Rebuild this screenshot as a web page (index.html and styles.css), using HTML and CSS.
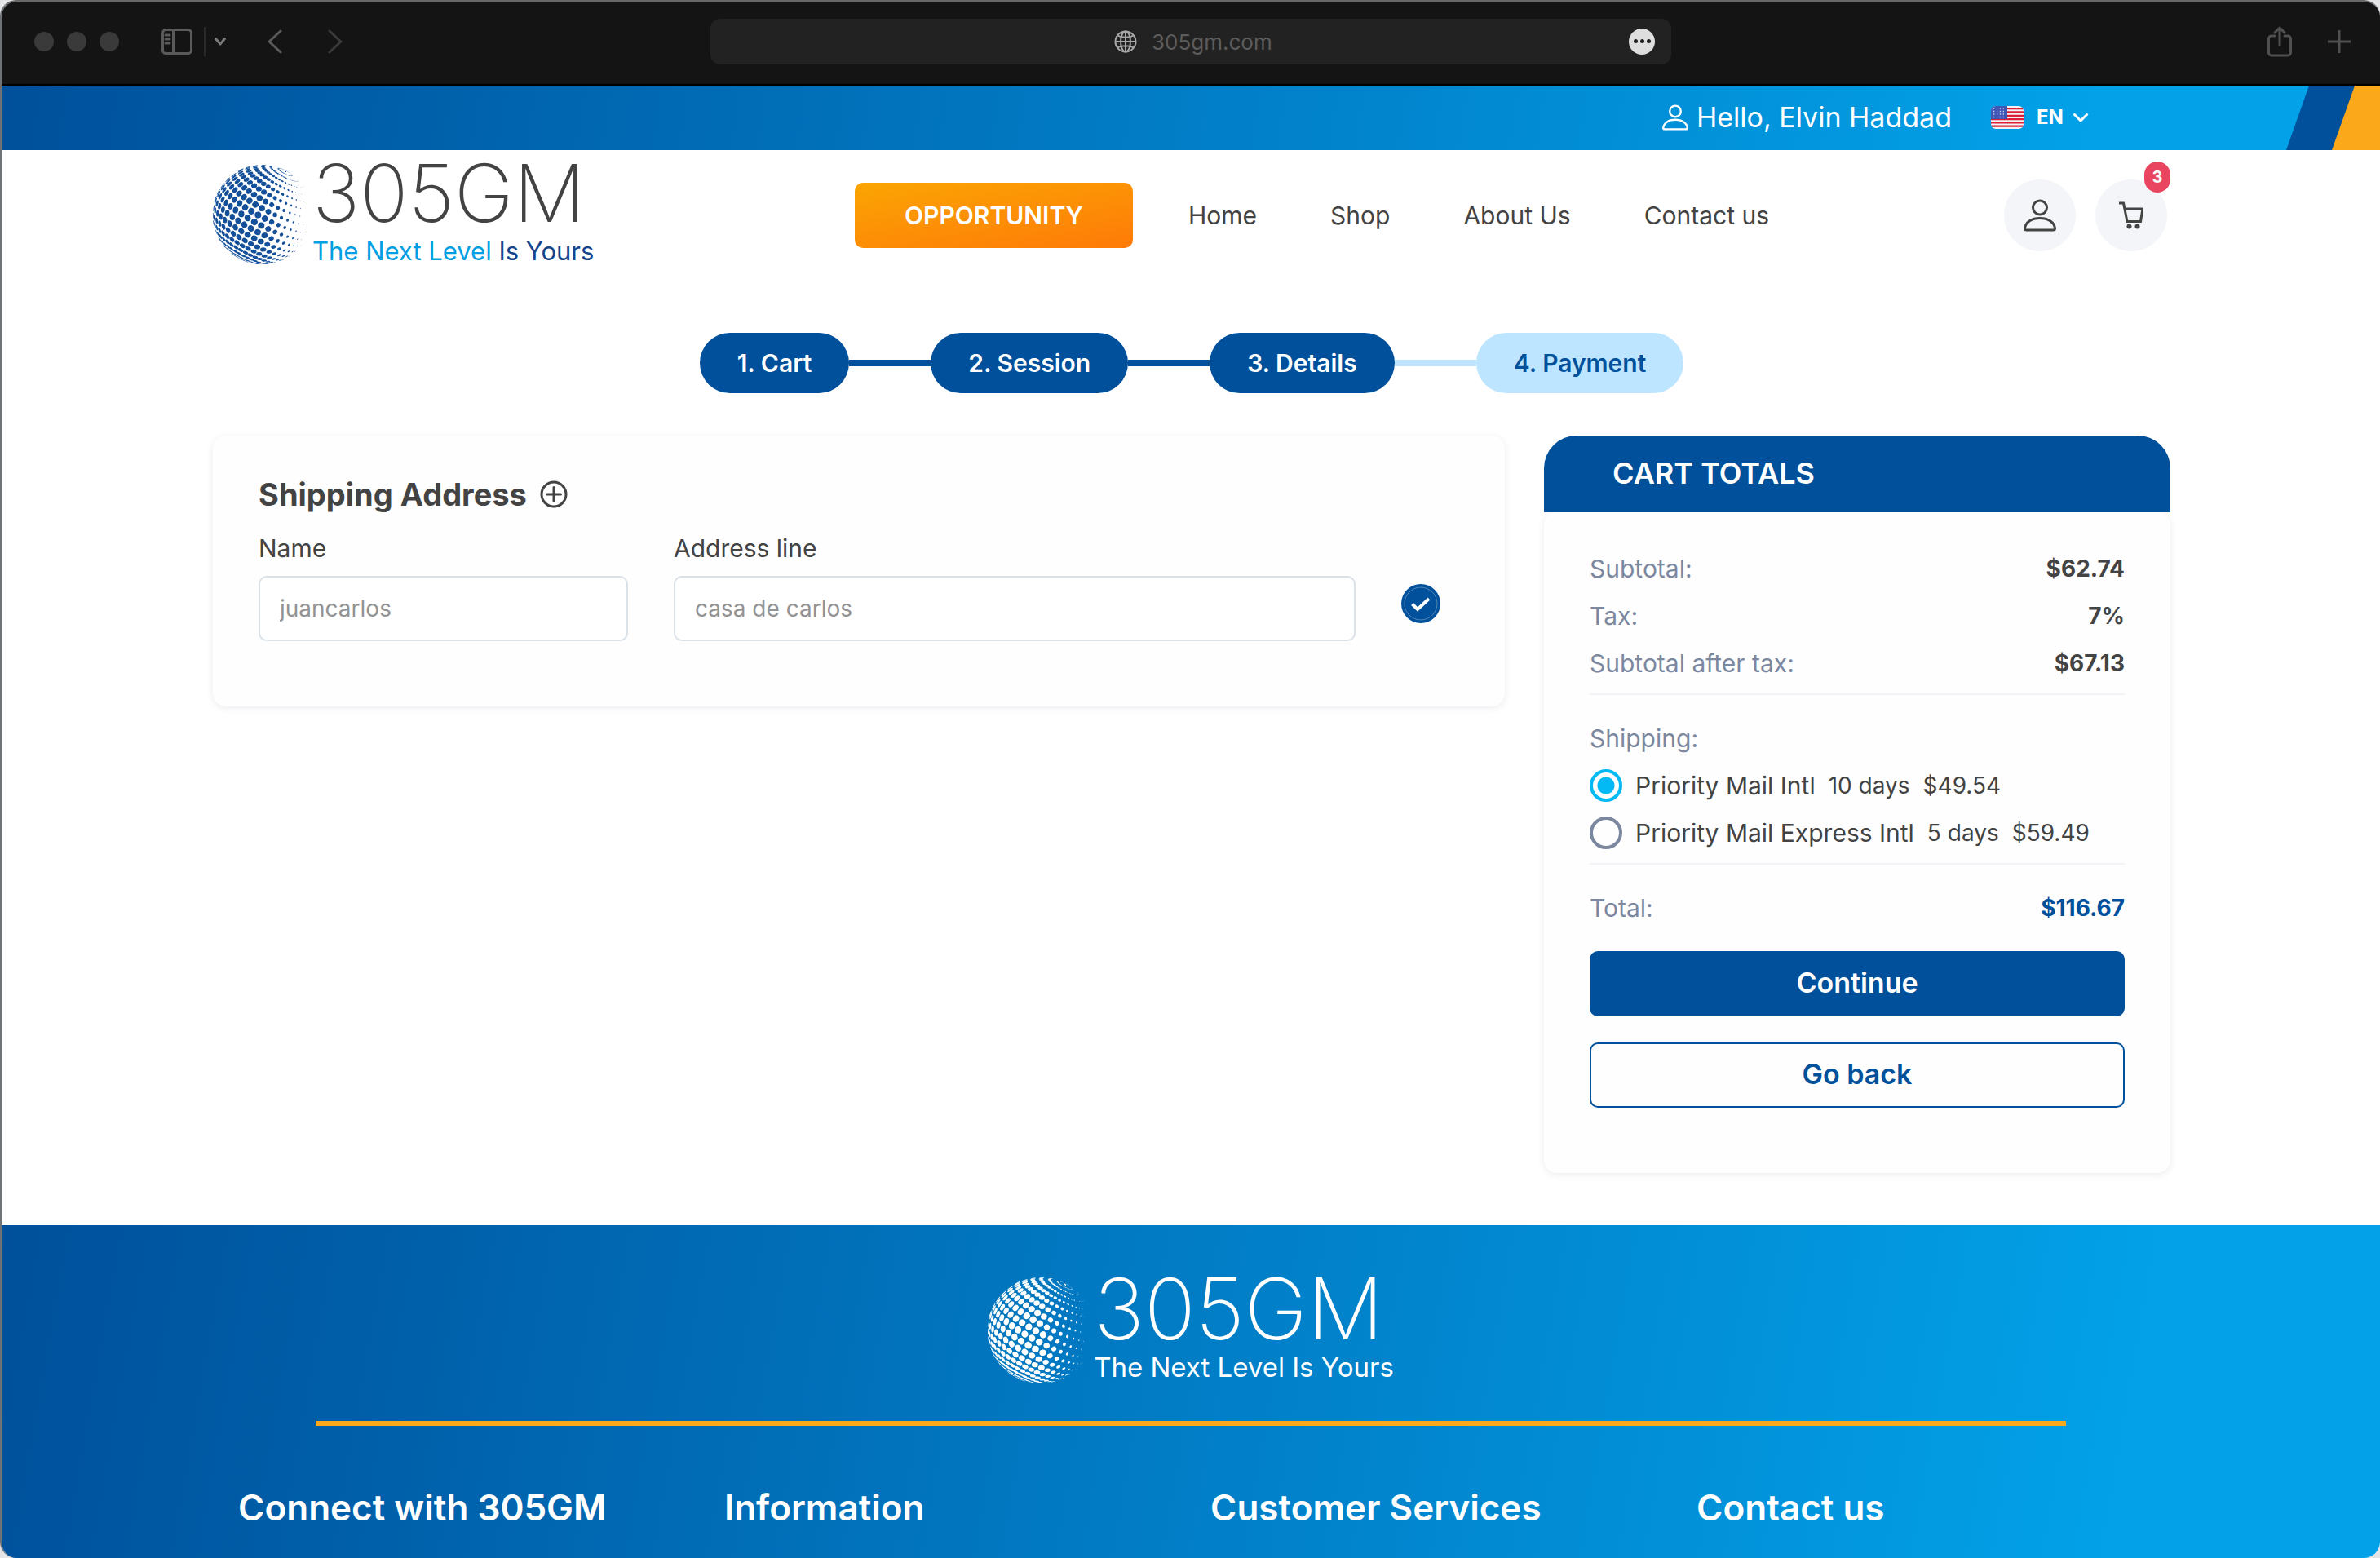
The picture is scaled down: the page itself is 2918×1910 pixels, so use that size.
FILE: index.html
```html
<!DOCTYPE html>
<html lang="en">
<head>
<meta charset="utf-8">
<meta name="viewport" content="width=device-width, initial-scale=1">
<title>305GM – Checkout</title>
<link rel="stylesheet" href="styles.css">
</head>
<body>
<svg class="sprite" width="0" height="0" aria-hidden="true">
  <symbol id="globe" viewBox="-1 -1 2 2"></symbol>
  <symbol id="user" viewBox="0 0 40 40">
    <circle cx="20" cy="10.500" r="8.500"/>
    <path d="M3.500 38C2 38 1.500 37 1.500 36C2.500 28 10 23.500 20 23.500S37.500 28 38.500 36C38.500 37 38 38 36.500 38Z"/>
  </symbol>
</svg>
<div class="window">
  <div class="toolbar">
    <div class="toolbar-left">
      <span class="lights"><i></i><i></i><i></i></span>
      <button class="tool tool-sidebar" aria-label="Sidebar">
        <svg width="38" height="32" viewBox="0 0 38 32"><rect x="1.500" y="1.500" width="35" height="29" rx="4"/><path d="M14.500 2v28M5 8h5M5 13h5M5 18h5"/></svg>
      </button>
      <button class="tool tool-menu" aria-label="Tab groups">
        <svg width="14" height="10" viewBox="0 0 14 10"><path d="M1.500 1.500L7 8l5.500-6.500"/></svg>
      </button>
      <button class="tool tool-back" aria-label="Back">
        <svg width="20" height="30" viewBox="0 0 20 30"><path d="M17 2L3 15l14 13"/></svg>
      </button>
      <button class="tool tool-forward" aria-label="Forward">
        <svg width="20" height="30" viewBox="0 0 20 30"><path d="M3 2l14 13L3 28"/></svg>
      </button>
    </div>
    <div class="address">
      <svg class="address-globe" width="28" height="28" viewBox="0 0 28 28"><circle cx="14" cy="14" r="12.500"/><ellipse cx="14" cy="14" rx="6" ry="12.500"/><path d="M14 1.500v25M1.500 14h25M4 6.500c5 3 15 3 20 0M4 21.500c5-3 15-3 20 0"/></svg>
      <input class="address-input" type="text" value="305gm.com" aria-label="Address">
      <button class="address-more" aria-label="More"><i></i><i></i><i></i></button>
    </div>
    <div class="toolbar-right">
      <button class="tool" aria-label="Share">
        <svg width="30" height="38" viewBox="0 0 30 38"><path d="M9 12H5c-2 0-3.500 1.500-3.500 3.500v17C1.500 34.500 3 36 5 36h20c2 0 3.500-1.500 3.500-3.500v-17c0-2-1.500-3.500-3.500-3.500h-4M15 23V2M9 8l6-6 6 6"/></svg>
      </button>
      <button class="tool" aria-label="New tab">
        <svg width="28" height="28" viewBox="0 0 28 28"><path d="M14 0.500v27M0.500 14h27"/></svg>
      </button>
    </div>
  </div>

  <div class="topbar">
    <div class="container topbar-inner">
      <span class="greeting"><svg class="icon-user" width="32" height="32"><use href="#user"/></svg>Hello, Elvin Haddad</span>
      <label class="language">
        <svg class="flag" width="40" height="28" viewBox="0 0 40 28" aria-label="Language">
          <rect width="40" height="28" fill="#f3f3f5"/>
          <path d="M0 3.200h40M0 7.500h40M0 11.800h40M0 16.100h40M0 20.400h40M0 24.700h40" stroke="#dd1f35" stroke-width="2.300"/>
          <rect width="20" height="16" fill="#3f55b5"/>
          <path d="M3 3h16M3 6.500h16M3 10h16M3 13.500h16" stroke="#c9d0f0" stroke-width="1.300" stroke-dasharray="1.300 2.600"/>
        </svg>
        <select class="language-select"><option>EN</option><option>ES</option></select>
        <svg class="language-arrow" width="20" height="12" viewBox="0 0 20 12"><path d="M1.500 1.500L10 10l8.500-8.500"/></svg>
      </label>
    </div>
    <span class="stripe"></span>
  </div>

  <header class="container header">
    <a class="logo" href="#">
      <svg class="logo-globe"><use href="#globe"/></svg>
      <span class="logo-text"><span class="logo-name">305GM</span><span class="logo-tagline">The Next Level <span class="logo-accent">Is Yours</span></span></span>
    </a>
    <nav class="nav">
      <a class="opportunity" href="#">OPPORTUNITY</a>
      <a href="#">Home</a>
      <a href="#">Shop</a>
      <a href="#">About Us</a>
      <a href="#">Contact us</a>
    </nav>
    <div class="actions">
      <button class="round" aria-label="Account"><svg class="icon-user" width="40" height="40"><use href="#user"/></svg></button>
      <button class="round" aria-label="Cart">
        <svg width="30" height="36" viewBox="0 0 30 36"><path class="line" d="M0 3h5.500L10 25.500h16.500L29 10H7"/><circle cx="12.500" cy="31.500" r="3"/><circle cx="22.500" cy="31.500" r="3"/></svg>
        <span class="badge">3</span>
      </button>
    </div>
  </header>

  <main class="container">
    <ol class="steps">
      <li>1. Cart</li>
      <li>2. Session</li>
      <li>3. Details</li>
      <li class="pending">4. Payment</li>
    </ol>
    <div class="columns">
      <section class="card shipping">
        <h2>Shipping Address
          <button class="add" aria-label="Add address"><svg width="34" height="34" viewBox="0 0 34 34"><circle cx="17" cy="17" r="15"/><path d="M17 8.500v17M8.500 17h17"/></svg></button>
        </h2>
        <div class="fields">
          <div class="field"><label for="name">Name</label><input id="name" type="text" placeholder="juancarlos"></div>
          <div class="field"><label for="address">Address line</label><input id="address" type="text" placeholder="casa de carlos"></div>
          <button class="confirm" aria-label="Use this address"><svg width="48" height="48" viewBox="0 0 48 48"><circle class="disc" cx="24" cy="24" r="24"/><circle class="ring" cx="24" cy="24" r="20"/><path d="M13.500 24.500l6.500 6.500L34 18"/></svg></button>
        </div>
      </section>
      <section class="cart">
        <h2>CART TOTALS</h2>
        <div class="card totals">
          <dl>
            <div class="row"><dt>Subtotal:</dt><dd>$62.74</dd></div>
            <div class="row"><dt>Tax:</dt><dd>7%</dd></div>
            <div class="row"><dt>Subtotal after tax:</dt><dd>$67.13</dd></div>
          </dl>
          <fieldset>
            <legend>Shipping:</legend>
            <label class="rate"><input type="radio" name="rate" checked><span>Priority Mail Intl</span><span class="rate-detail">10 days</span><span class="rate-detail">$49.54</span></label>
            <label class="rate"><input type="radio" name="rate"><span>Priority Mail Express Intl</span><span class="rate-detail">5 days</span><span class="rate-detail">$59.49</span></label>
          </fieldset>
          <dl>
            <div class="row grand"><dt>Total:</dt><dd>$116.67</dd></div>
          </dl>
          <div class="buttons">
            <button class="button primary">Continue</button>
            <button class="button">Go back</button>
          </div>
        </div>
      </section>
    </div>
  </main>

  <footer class="footer">
    <a class="logo logo-light" href="#">
      <svg class="logo-globe"><use href="#globe"/></svg>
      <span class="logo-text"><span class="logo-name">305GM</span><span class="logo-tagline">The Next Level Is Yours</span></span>
    </a>
    <hr>
    <div class="footer-columns">
      <h3>Connect with 305GM</h3>
      <h3>Information</h3>
      <h3>Customer Services</h3>
      <h3>Contact us</h3>
    </div>
  </footer>
</div>
<script src="globe.js"></script>
</body>
</html>
```
FILE: styles.css
```css
* { box-sizing: border-box; }

body {
  margin: 0;
  background: #e4e4e6;
  color: #434343;
  font-family: Inter, "Liberation Sans", sans-serif;
  font-size: 30px;
  line-height: 40px;
}

button, input, select { font: inherit; color: inherit; }
button { padding: 0; border: 0; background: none; cursor: pointer; }
a { color: inherit; text-decoration: none; }
h2, h3, dl, dd, ol { margin: 0; padding: 0; }
svg { display: block; flex: none; }
.sprite { position: absolute; }

.window {
  display: flex;
  flex-direction: column;
  min-height: 100vh;
  overflow: hidden;
  border-top: 2px solid #66686a;
  border-left: 2px solid #6f7276;
  border-radius: 20px;
  background: #fff;
}

.container {
  width: 100%;
  max-width: 2402px;
  margin: 0 auto;
  padding-left: 2px;
}

/* Browser toolbar */
.toolbar {
  display: grid;
  grid-template-columns: 1fr minmax(0, 1178px) 1fr;
  align-items: center;
  height: 103px;
  padding: 0 40px 4px;
  border-bottom: 2px solid #000;
  background: #141414;
}
.toolbar-left, .toolbar-right { display: flex; align-items: center; }
.toolbar-right { justify-content: flex-end; gap: 44px; margin-right: -4px; }
.lights { display: flex; gap: 16px; margin-right: 52px; }
.lights i { width: 24px; height: 24px; border-radius: 50%; background: #3a3a3a; }
.tool svg { fill: none; stroke: #5a5a5a; stroke-width: 3; stroke-linecap: round; stroke-linejoin: round; }
.tool-sidebar { margin-right: 14px; }
.tool-menu { padding: 13px 0 13px 11px; border-left: 2px solid #2a2a2a; }
.tool-menu svg { stroke: #7a7a7a; }
.tool-back { margin-left: 50px; }
.tool-forward { margin-left: 54px; }
.tool-forward svg { stroke: #3a3a3a; }
.toolbar-right svg { stroke: #505050; }
.address {
  position: relative;
  display: flex;
  align-items: center;
  justify-content: center;
  gap: 18px;
  height: 56px;
  padding-left: 6px;
  border-radius: 12px;
  background: #222;
}
.address-globe { fill: none; stroke: #a8a8a8; stroke-width: 2; }
.address-input {
  width: 148px;
  padding: 2px 0 0;
  border: 0;
  background: none;
  color: #5c5c5c;
  font-size: 26px;
}
.address-more {
  position: absolute;
  right: 20px;
  display: flex;
  align-items: center;
  justify-content: center;
  gap: 3px;
  width: 32px;
  height: 32px;
  border-radius: 50%;
  background: #dedede;
}
.address-more i { width: 5px; height: 5px; border-radius: 50%; background: #222; }

/* Account strip */
.topbar {
  position: relative;
  overflow: hidden;
  background: linear-gradient(100deg, #00509b, #02a1e8 88%);
  color: #fff;
}
.topbar-inner {
  display: flex;
  align-items: center;
  justify-content: flex-end;
  gap: 48px;
  height: 79px;
  padding-right: 100px;
  padding-bottom: 2px;
}
.greeting { display: flex; align-items: center; gap: 10px; font-size: 34px; }
.icon-user { fill: none; stroke: currentColor; stroke-width: 3; }
.language { display: flex; align-items: center; }
.flag { margin-right: 16px; border-radius: 6px; }
.language-select {
  appearance: none;
  width: 64px;
  margin-right: -20px;
  padding: 0;
  border: 0;
  background: none;
  font-size: 24px;
  font-weight: 700;
}
.language-arrow { pointer-events: none; fill: none; stroke: #fff; stroke-width: 3; }
.stripe, .stripe::after {
  position: absolute;
  top: 0;
  right: 0;
  height: 100%;
  clip-path: polygon(28px 0, 100% 0, 100% 100%, 0 100%);
}
.stripe { width: 115px; background: #00509b; }
.stripe::after { content: ""; width: 59px; background: #fba81b; }

/* Site header */
.header {
  display: grid;
  grid-template-columns: 787px 1fr auto;
  align-items: center;
  height: 160px;
}
.logo { display: flex; align-items: flex-start; }
.logo-globe { width: 122px; height: 122px; fill: #14509a; }
.logo-text { display: flex; flex-direction: column; gap: 18px; white-space: nowrap; }
.logo-name { font-size: 98px; line-height: 70px; font-weight: 200; }
.logo-tagline { color: #009ee2; font-size: 31px; line-height: 36px; }
.logo-accent { color: #14458c; }
.nav { display: flex; align-items: center; gap: 90px; white-space: nowrap; }
.opportunity {
  width: 341px;
  margin-right: -22px;
  padding: 20px 0;
  border-radius: 10px;
  background: linear-gradient(170deg, #fba503, #fe7a08);
  color: #fff;
  font-weight: 600;
  text-align: center;
}
.actions { display: flex; gap: 24px; padding-right: 4px; }
.round {
  position: relative;
  display: flex;
  align-items: center;
  justify-content: center;
  width: 88px;
  height: 88px;
  border-radius: 50%;
  background: #f3f5f9;
}
.round svg { fill: #434343; }
.round .icon-user { fill: none; }
.round .line { fill: none; stroke: #434343; stroke-width: 3; }
.badge {
  position: absolute;
  top: -22px;
  right: -4px;
  width: 32px;
  height: 38px;
  border-radius: 16px;
  background: #ea4560;
  color: #fff;
  font-size: 20px;
  line-height: 38px;
  font-weight: 700;
}

/* Checkout steps */
.steps {
  display: flex;
  justify-content: center;
  margin: 64px 0 52px;
  list-style: none;
  line-height: 74px;
  font-weight: 600;
}
.steps li {
  position: relative;
  padding: 0 46px;
  border-radius: 37px;
  background: #00509b;
  color: #fff;
}
.steps li + li { margin-left: 100px; }
.steps li + li::before {
  content: "";
  position: absolute;
  top: 33px;
  right: 100%;
  width: 100px;
  height: 8px;
  background: #00509b;
}
.steps .pending { background: #bee5ff; color: #00509b; }
.steps .pending::before { background: #bee5ff; }

/* Cards */
.columns {
  display: grid;
  grid-template-columns: minmax(0, 1fr) 768px;
  align-items: start;
  gap: 48px;
  margin-bottom: 64px;
}
.card {
  border-radius: 16px;
  background: #fefefe;
  box-shadow: 0 2px 8px rgba(60, 70, 110, 0.1);
}
.shipping { padding: 48px 56px 80px; }
.shipping h2 {
  display: flex;
  align-items: center;
  gap: 16px;
  margin-bottom: 22px;
  font-size: 38px;
  line-height: 48px;
}
.add svg { fill: none; stroke: #434343; stroke-width: 3; stroke-linecap: round; }
.fields {
  display: grid;
  grid-template-columns: 453fr 836fr 71px;
  gap: 56px;
}
.field { display: flex; flex-direction: column; gap: 14px; }
.field input {
  width: 100%;
  height: 80px;
  padding: 0 24px;
  border: 2px solid #dae1e7;
  border-radius: 10px;
  background: #fff;
  font-size: 28px;
}
.field input::placeholder { color: #939393; opacity: 1; }
.confirm { align-self: end; justify-self: start; margin-bottom: 22px; }
.confirm svg { fill: none; stroke: #fff; stroke-width: 4; }
.confirm .disc { fill: #00509b; stroke: none; }
.confirm .ring { stroke: #4f86bd; stroke-width: 1; }

/* Cart totals */
.cart h2 {
  padding: 22px 84px 24px;
  border-radius: 40px 40px 0 0;
  background: #00509b;
  color: #fff;
  font-size: 36px;
  line-height: 48px;
  font-weight: 600;
}
.totals { padding: 40px 56px 80px; }
.row {
  display: flex;
  align-items: center;
  justify-content: space-between;
  height: 58px;
}
.row dt, .totals legend { color: #7c88a0; }
.row dd { font-size: 28px; font-weight: 700; }
.grand dd { color: #00509b; }
.totals fieldset {
  margin: 8px 0 24px;
  padding: 24px 0 8px;
  border: solid #f2f3f8;
  border-width: 2px 0;
}
.totals legend { float: left; width: 100%; padding: 0; line-height: 58px; }
.rate { display: flex; align-items: center; clear: both; gap: 16px; height: 58px; white-space: nowrap; }
.rate-detail { font-size: 28px; }
.rate input {
  appearance: none;
  width: 40px;
  height: 40px;
  margin: 0;
  border: 4px solid #7c88a0;
  border-radius: 50%;
}
.rate input:checked {
  border-color: #03baf5;
  background: radial-gradient(circle, #03baf5 10px, transparent 11px);
}
.buttons { display: flex; flex-direction: column; gap: 32px; margin-top: 24px; }
.button {
  height: 80px;
  padding-bottom: 2px;
  border: 2px solid #00509b;
  border-radius: 10px;
  color: #00509b;
  font-size: 34px;
  font-weight: 600;
}
.primary { background: #00509b; color: #fff; }

/* Footer */
.footer {
  flex: 1;
  display: flex;
  flex-direction: column;
  align-items: center;
  padding: 64px 0 34px;
  background: linear-gradient(100deg, #00509b, #02a1e8 89%);
  color: #fff;
}
.logo-light .logo-globe { width: 130px; height: 130px; fill: #fff; }
.logo-light .logo-name { font-size: 104px; line-height: 76px; }
.logo-light .logo-tagline { color: #fff; font-size: 33px; line-height: 32px; }
.footer hr {
  width: calc(100% - 770px);
  height: 6px;
  margin: 46px 0 72px;
  border: 0;
  background: #fba81b;
}
.footer-columns {
  display: grid;
  grid-template-columns: repeat(4, 1fr);
  width: 100%;
  max-width: 2384px;
}
.footer-columns h3 { padding-left: 24px; font-size: 44px; line-height: 56px; font-weight: 600; }
```
FILE: globe.js
```js
// Fills the globe symbol with dots set on the meridians and parallels of a tilted sphere.
const symbol = document.getElementById("globe");
const step = Math.PI / 20;
const tilt = 28 * Math.PI / 180;
const lean = -12 * Math.PI / 180;

for (let i = -10; i <= 10; i++) {
  for (let j = 0; j < 40; j++) {
    const lat = i * step;
    const lon = (j + 0.5) * step;
    const x0 = Math.cos(lat) * Math.sin(lon);
    const y0 = -Math.sin(lat);
    const z0 = Math.cos(lat) * Math.cos(lon);
    const y1 = y0 * Math.cos(lean) - z0 * Math.sin(lean);
    const z = y0 * Math.sin(lean) + z0 * Math.cos(lean);
    const x = x0 * Math.cos(tilt) - y1 * Math.sin(tilt);
    const y = x0 * Math.sin(tilt) + y1 * Math.cos(tilt);
    const fade = Math.min(1, (0.92 - x) / 0.92);
    if (z < 0.04 || fade < 0.1) continue;
    const size = 0.066 * fade * Math.max(0.3, Math.sqrt(Math.cos(lat)));
    const dot = document.createElementNS("http://www.w3.org/2000/svg", "ellipse");
    dot.setAttribute("rx", size * Math.max(z, 0.12));
    dot.setAttribute("ry", size);
    dot.setAttribute("transform", `translate(${x} ${y}) rotate(${Math.atan2(y, x) * 180 / Math.PI})`);
    symbol.appendChild(dot);
  }
}
```
